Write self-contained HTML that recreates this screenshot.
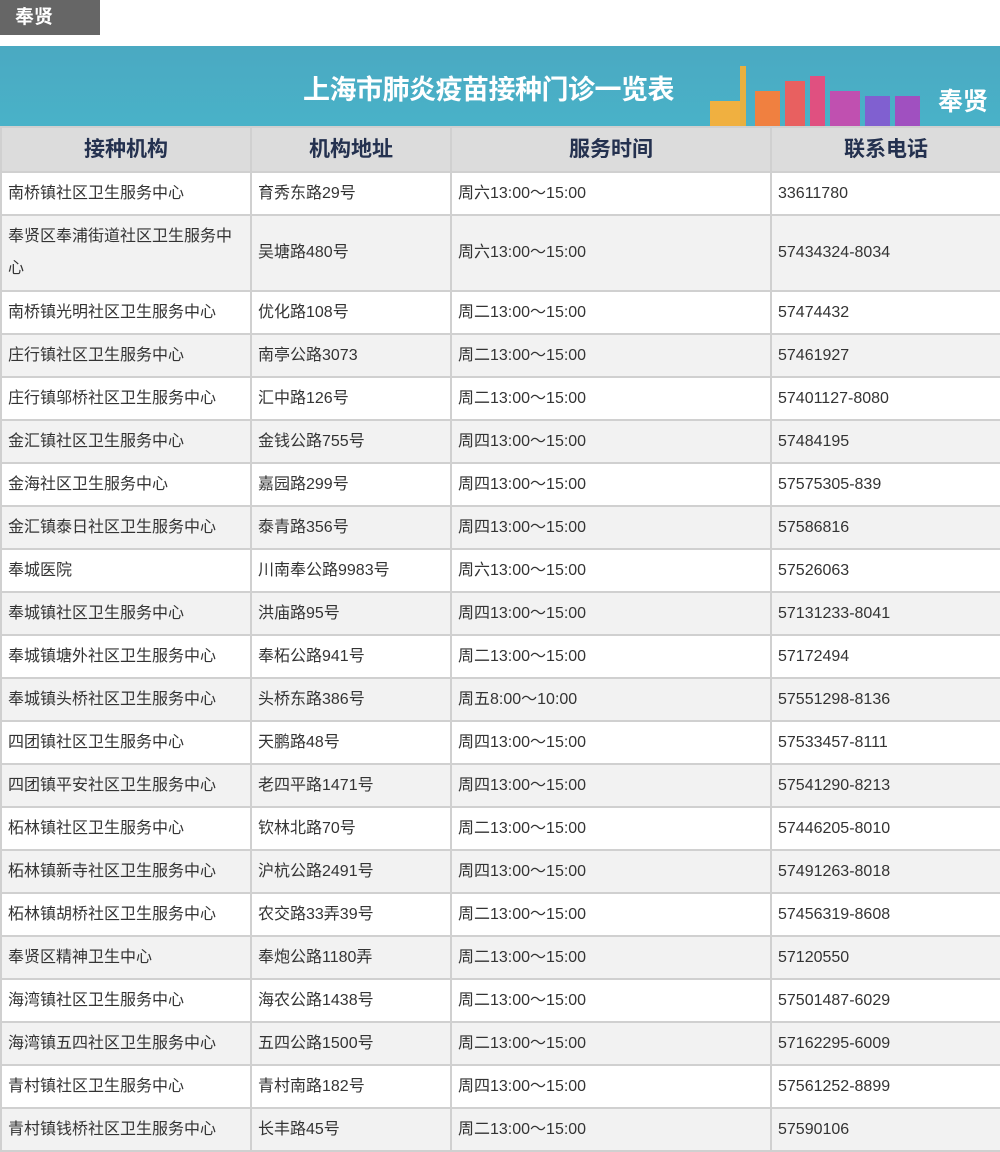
<!DOCTYPE html>
<html><head><meta charset="utf-8"><style>
body{margin:0;width:1000px;height:1150px;overflow:hidden;background:#fff;font-family:"Liberation Sans","Noto Sans CJK SC",sans-serif;}
.tag{position:absolute;left:0;top:0;width:100px;height:35px;background:#666;color:#fff;font-weight:bold;font-size:19px;line-height:35px;padding-left:15px;box-sizing:border-box;}
.banner{position:absolute;left:0;top:46px;width:1000px;height:80px;background:linear-gradient(#4aa9c2,#49b2c8);overflow:hidden;}
.banner .t{position:absolute;left:303px;top:22px;color:#fff;font-weight:bold;font-size:27px;letter-spacing:-0.5px;}
.banner .d{position:absolute;right:12px;top:36px;color:#fff;font-weight:bold;font-size:25px;}
table{position:absolute;left:0;top:126px;border-collapse:collapse;width:1000px;table-layout:fixed;}
td,th{border:2px solid #d0d0d0;font-size:16px;color:#333;padding:0 4px 0 6px;text-align:left;font-weight:normal;line-height:32px;}
th{background:#dcdcdc;height:43px;text-align:center;font-size:21px;font-weight:bold;color:#24314f;padding:0;}
tr td{height:41px;}
tr:nth-child(odd) td{background:#f2f2f2;}
</style></head><body>
<div class="tag">奉贤</div>
<div class="banner">
<svg width="300" height="80" style="position:absolute;left:700px;top:0">
<rect x="40" y="20" width="6" height="60" fill="#e8b040"/><rect x="10" y="55" width="30" height="25" fill="#f0b040"/>
<rect x="55" y="45" width="25" height="35" fill="#f08040"/><rect x="85" y="35" width="20" height="45" fill="#e86060"/>
<rect x="110" y="30" width="15" height="50" fill="#e05080"/><rect x="130" y="45" width="30" height="35" fill="#c050b0"/>
<rect x="165" y="50" width="25" height="30" fill="#8060d0"/><rect x="195" y="50" width="25" height="30" fill="#a050c0"/>
</svg>
<div class="t">上海市肺炎疫苗接种门诊一览表</div><div class="d">奉贤</div></div>
<table>
<colgroup><col style="width:250px"><col style="width:200px"><col style="width:320px"><col style="width:230px"></colgroup>
<tr><th>接种机构</th><th>机构地址</th><th>服务时间</th><th>联系电话</th></tr>
<tr><td>南桥镇社区卫生服务中心</td><td>育秀东路29号</td><td>周六13:00～15:00</td><td>33611780</td></tr>
<tr><td style="height:74px">奉贤区奉浦街道社区卫生服务中心</td><td>吴塘路480号</td><td>周六13:00～15:00</td><td>57434324-8034</td></tr>
<tr><td>南桥镇光明社区卫生服务中心</td><td>优化路108号</td><td>周二13:00～15:00</td><td>57474432</td></tr>
<tr><td>庄行镇社区卫生服务中心</td><td>南亭公路3073</td><td>周二13:00～15:00</td><td>57461927</td></tr>
<tr><td>庄行镇邬桥社区卫生服务中心</td><td>汇中路126号</td><td>周二13:00～15:00</td><td>57401127-8080</td></tr>
<tr><td>金汇镇社区卫生服务中心</td><td>金钱公路755号</td><td>周四13:00～15:00</td><td>57484195</td></tr>
<tr><td>金海社区卫生服务中心</td><td>嘉园路299号</td><td>周四13:00～15:00</td><td>57575305-839</td></tr>
<tr><td>金汇镇泰日社区卫生服务中心</td><td>泰青路356号</td><td>周四13:00～15:00</td><td>57586816</td></tr>
<tr><td>奉城医院</td><td>川南奉公路9983号</td><td>周六13:00～15:00</td><td>57526063</td></tr>
<tr><td>奉城镇社区卫生服务中心</td><td>洪庙路95号</td><td>周四13:00～15:00</td><td>57131233-8041</td></tr>
<tr><td>奉城镇塘外社区卫生服务中心</td><td>奉柘公路941号</td><td>周二13:00～15:00</td><td>57172494</td></tr>
<tr><td>奉城镇头桥社区卫生服务中心</td><td>头桥东路386号</td><td>周五8:00～10:00</td><td>57551298-8136</td></tr>
<tr><td>四团镇社区卫生服务中心</td><td>天鹏路48号</td><td>周四13:00～15:00</td><td>57533457-8111</td></tr>
<tr><td>四团镇平安社区卫生服务中心</td><td>老四平路1471号</td><td>周四13:00～15:00</td><td>57541290-8213</td></tr>
<tr><td>柘林镇社区卫生服务中心</td><td>钦林北路70号</td><td>周二13:00～15:00</td><td>57446205-8010</td></tr>
<tr><td>柘林镇新寺社区卫生服务中心</td><td>沪杭公路2491号</td><td>周四13:00～15:00</td><td>57491263-8018</td></tr>
<tr><td>柘林镇胡桥社区卫生服务中心</td><td>农交路33弄39号</td><td>周二13:00～15:00</td><td>57456319-8608</td></tr>
<tr><td>奉贤区精神卫生中心</td><td>奉炮公路1180弄</td><td>周二13:00～15:00</td><td>57120550</td></tr>
<tr><td>海湾镇社区卫生服务中心</td><td>海农公路1438号</td><td>周二13:00～15:00</td><td>57501487-6029</td></tr>
<tr><td>海湾镇五四社区卫生服务中心</td><td>五四公路1500号</td><td>周二13:00～15:00</td><td>57162295-6009</td></tr>
<tr><td>青村镇社区卫生服务中心</td><td>青村南路182号</td><td>周四13:00～15:00</td><td>57561252-8899</td></tr>
<tr><td>青村镇钱桥社区卫生服务中心</td><td>长丰路45号</td><td>周二13:00～15:00</td><td>57590106</td></tr>
</table>
</body></html>
